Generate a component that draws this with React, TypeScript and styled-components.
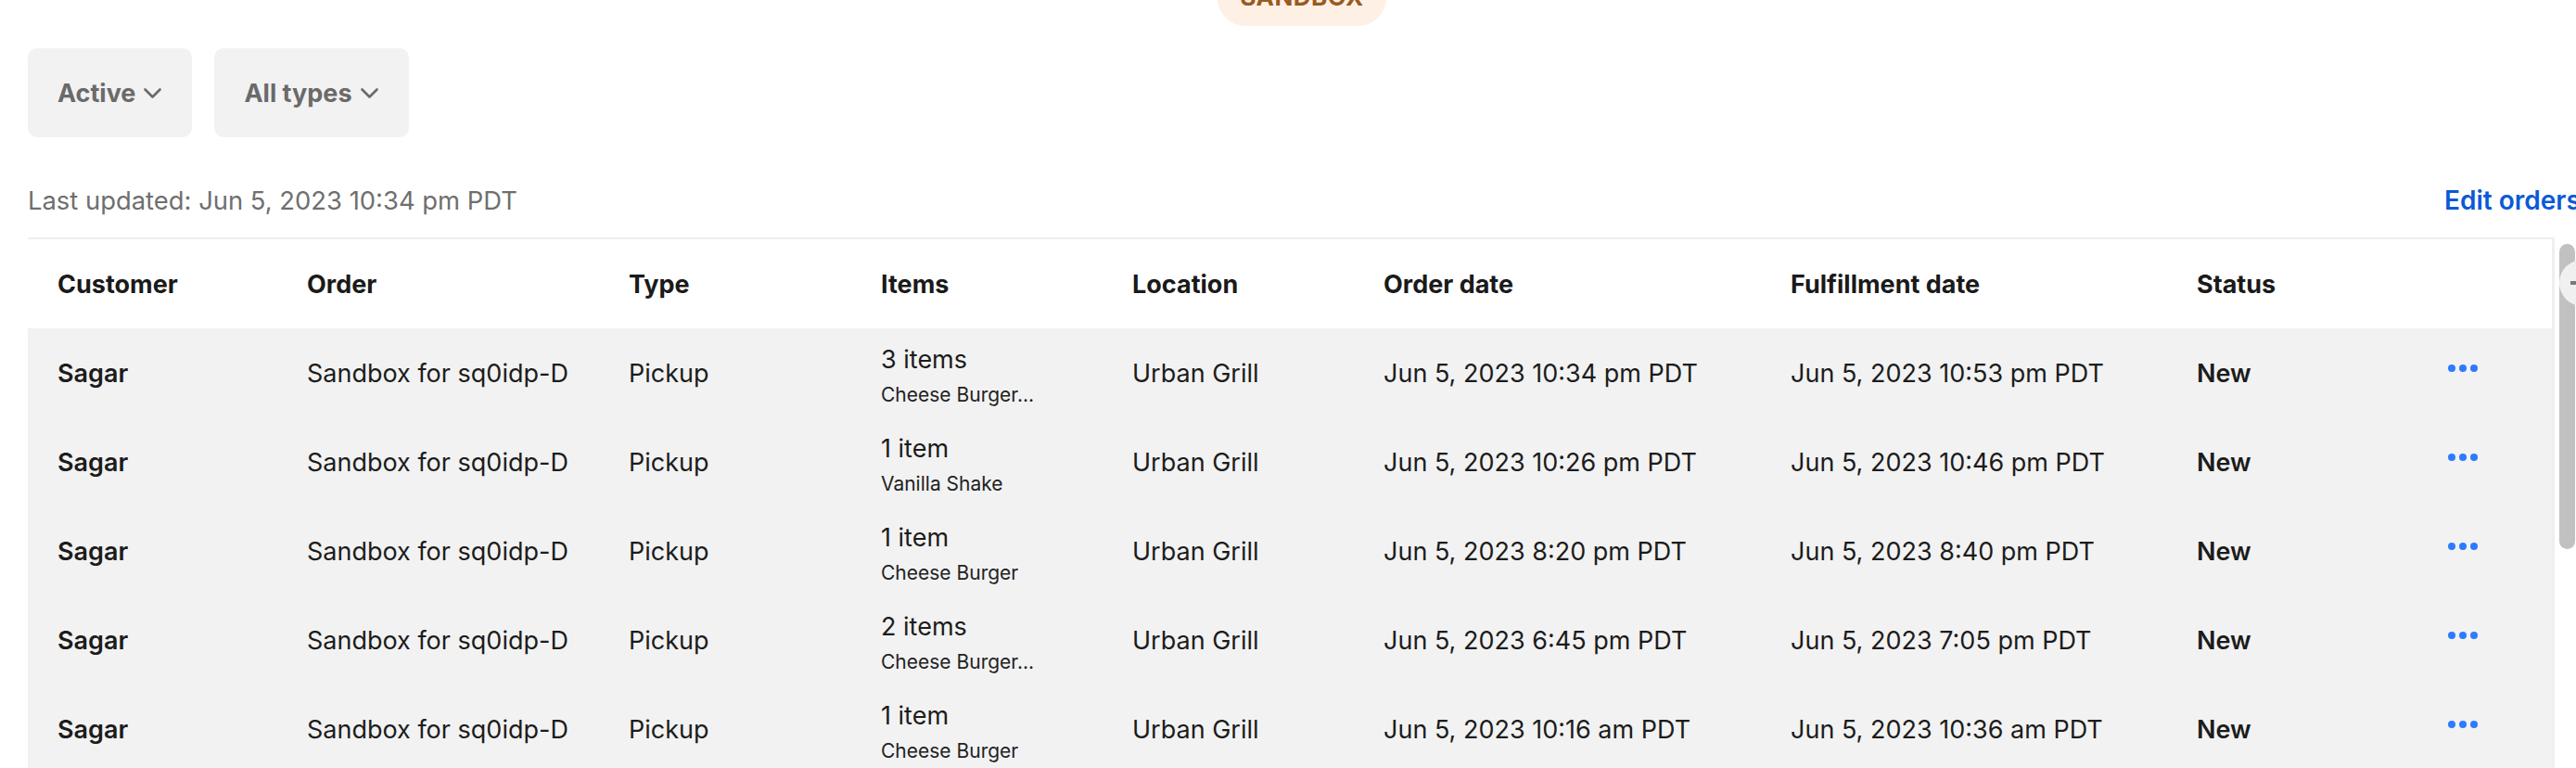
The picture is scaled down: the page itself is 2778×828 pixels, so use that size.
import React from "react";
import styled, { createGlobalStyle } from "styled-components";

const GlobalStyle = createGlobalStyle`
  html, body {
    margin: 0;
    padding: 0;
    overflow: hidden;
    background: #ffffff;
    font-family: Inter, "Noto Sans", sans-serif;
    color: #1c1c1c;
  }
  * { box-sizing: border-box; }
`;

const Page = styled.div`
  display: flex;
  flex-direction: column;
  padding-left: 30px;
  width: 100%;
  position: relative;
`;

const BadgeRow = styled.div`
  display: flex;
  justify-content: center;
  margin-top: -32px;
`;

const Badge = styled.div`
  height: 60px;
  padding: 0 24px 4px;
  border-radius: 30px;
  background: #fff0e6;
  color: #9a5a1f;
  font-size: 26px;
  font-weight: 700;
  letter-spacing: 0.5px;
  display: flex;
  align-items: center;
`;

const Filters = styled.div`
  display: flex;
  gap: 24px;
  margin-top: 24px;
`;

const FilterButton = styled.button`
  height: 96px;
  padding: 0 33px 0 32px;
  border: none;
  border-radius: 10px;
  background: #f2f2f2;
  color: #6a6a6a;
  font-family: Inter, sans-serif;
  font-size: 27px;
  font-weight: 700;
  display: flex;
  align-items: center;
  gap: 9px;
`;

const InfoRow = styled.div`
  display: flex;
  justify-content: space-between;
  align-items: center;
  height: 40px;
  margin-top: 48px;
  margin-bottom: 20px;
  margin-right: -10px;
`;

const Updated = styled.span`
  font-size: 27.4px;
  color: #6f6f6f;
`;

const EditLink = styled.a`
  font-size: 28px;
  font-weight: 600;
  color: #0a5ad6;
  text-decoration: none;
  white-space: nowrap;
  overflow: hidden;
  width: 152px;
`;

const TableArea = styled.div`
  display: flex;
  align-items: stretch;
`;

const Table = styled.div`
  width: 2725px;
  border-top: 2px solid #efefef;
  border-right: 3px solid #efefef;
`;

const cols = "269px 347px 272px 271px 271px 439px 438px 271px 1fr";

const HeaderRow = styled.div`
  display: grid;
  grid-template-columns: ${cols};
  height: 96px;
  background: #ffffff;
`;

const HeadCell = styled.div`
  display: flex;
  align-items: center;
  padding-left: 32px;
  font-size: 27px;
  font-weight: 700;
  color: #1a1a1a;
`;

const Row = styled.div`
  display: grid;
  grid-template-columns: ${cols};
  height: 96px;
  background: #f2f2f2;
`;

const Cell = styled.div<{ $bold?: boolean }>`
  display: flex;
  align-items: center;
  padding-left: 32px;
  font-size: 27px;
  font-weight: ${(p) => (p.$bold ? 600 : 400)};
  color: #1c1c1c;
  white-space: nowrap;
`;

const ItemsBlock = styled.div`
  display: flex;
  flex-direction: column;
  padding-top: 7px;
`;

const ItemsCount = styled.span`
  font-size: 27px;
  line-height: 32px;
`;

const ItemsDetail = styled.span`
  font-size: 21px;
  line-height: 28px;
  margin-top: 8px;
  color: #222;
`;

const Dots = styled.svg`
  margin-top: -10px;
`;

const ScrollTrack = styled.div`
  width: 23px;
  padding-left: 5px;
  padding-top: 7px;
`;

const ScrollThumb = styled.div`
  width: 17px;
  height: 329px;
  border-radius: 9px;
  background: #c1c1c1;
`;

const FloatCircle = styled.div`
  position: absolute;
  left: 2760px;
  top: 280px;
  width: 50px;
  height: 50px;
  border-radius: 50%;
  background: #f0f0f0;
  display: flex;
  align-items: center;
  padding-left: 12px;
`;

const Dash = styled.div`
  width: 20px;
  height: 4px;
  background: #7a7a7a;
`;

const Chevron = () => (
  <svg width="19" height="11" viewBox="0 0 19 11" fill="none">
    <path d="M1.5 1.5 L9.5 9.5 L17.5 1.5" stroke="#6a6a6a" strokeWidth="2.6" strokeLinecap="round" strokeLinejoin="round" />
  </svg>
);

type Order = {
  count: string;
  detail: string;
  orderDate: string;
  fulfillDate: string;
};

const orders: Order[] = [
  { count: "3 items", detail: "Cheese Burger...", orderDate: "Jun 5, 2023 10:34 pm PDT", fulfillDate: "Jun 5, 2023 10:53 pm PDT" },
  { count: "1 item", detail: "Vanilla Shake", orderDate: "Jun 5, 2023 10:26 pm PDT", fulfillDate: "Jun 5, 2023 10:46 pm PDT" },
  { count: "1 item", detail: "Cheese Burger", orderDate: "Jun 5, 2023 8:20 pm PDT", fulfillDate: "Jun 5, 2023 8:40 pm PDT" },
  { count: "2 items", detail: "Cheese Burger...", orderDate: "Jun 5, 2023 6:45 pm PDT", fulfillDate: "Jun 5, 2023 7:05 pm PDT" },
  { count: "1 item", detail: "Cheese Burger", orderDate: "Jun 5, 2023 10:16 am PDT", fulfillDate: "Jun 5, 2023 10:36 am PDT" },
];

const headers = ["Customer", "Order", "Type", "Items", "Location", "Order date", "Fulfillment date", "Status", ""];

export default function App() {
  return (
    <>
      <GlobalStyle />
      <Page>
        <BadgeRow>
          <Badge>SANDBOX</Badge>
        </BadgeRow>
        <Filters>
          <FilterButton>
            Active <Chevron />
          </FilterButton>
          <FilterButton>
            All types <Chevron />
          </FilterButton>
        </Filters>
        <InfoRow>
          <Updated>Last updated: Jun 5, 2023 10:34 pm PDT</Updated>
          <EditLink href="#">Edit orders</EditLink>
        </InfoRow>
        <TableArea>
          <Table>
            <HeaderRow>
              {headers.map((h, i) => (
                <HeadCell key={i}>{h}</HeadCell>
              ))}
            </HeaderRow>
            {orders.map((o, i) => (
              <Row key={i}>
                <Cell $bold>Sagar</Cell>
                <Cell>Sandbox for sq0idp-D</Cell>
                <Cell>Pickup</Cell>
                <Cell>
                  <ItemsBlock>
                    <ItemsCount>{o.count}</ItemsCount>
                    <ItemsDetail>{o.detail}</ItemsDetail>
                  </ItemsBlock>
                </Cell>
                <Cell>Urban Grill</Cell>
                <Cell>{o.orderDate}</Cell>
                <Cell>{o.fulfillDate}</Cell>
                <Cell $bold>New</Cell>
                <Cell>
                  <Dots width="32" height="8" viewBox="0 0 32 8">
                    <circle cx="4" cy="4" r="4" fill="#2d7bff" />
                    <circle cx="16" cy="4" r="4" fill="#2d7bff" />
                    <circle cx="28" cy="4" r="4" fill="#2d7bff" />
                  </Dots>
                </Cell>
              </Row>
            ))}
          </Table>
          <ScrollTrack>
            <ScrollThumb />
          </ScrollTrack>
        </TableArea>
        <FloatCircle>
          <Dash />
        </FloatCircle>
      </Page>
    </>
  );
}
